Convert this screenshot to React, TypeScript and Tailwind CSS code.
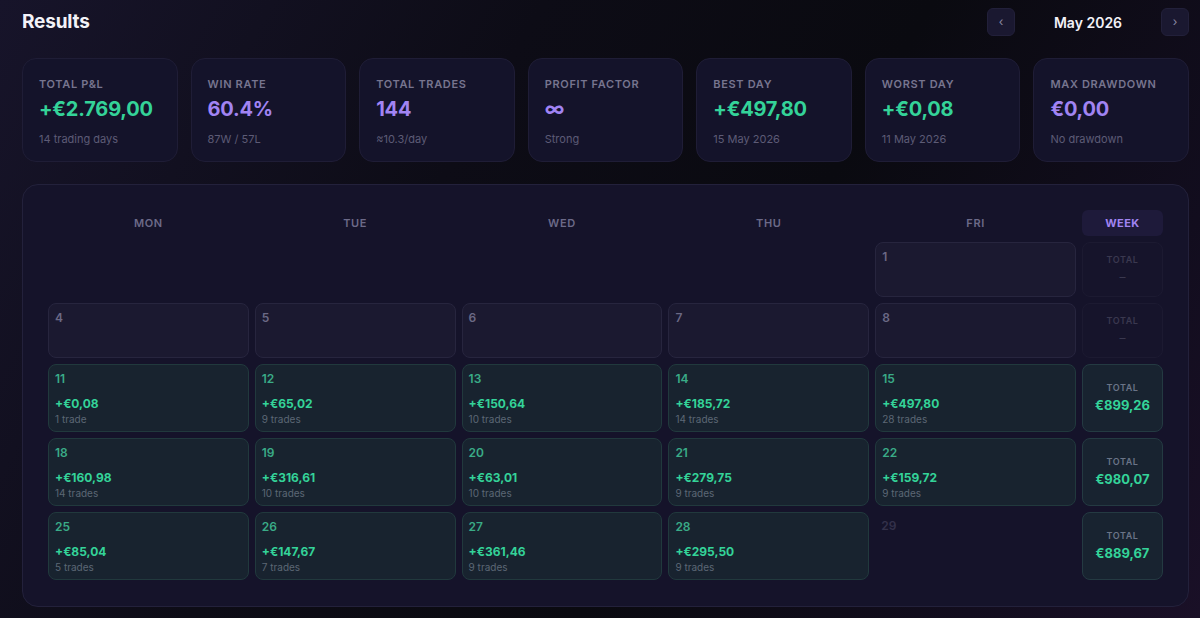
import React from "react";

type Stat = { label: string; value: string; sub: string; tone: "green" | "purple" };

const stats: Stat[] = [
  { label: "TOTAL P&L", value: "+€2.769,00", sub: "14 trading days", tone: "green" },
  { label: "WIN RATE", value: "60.4%", sub: "87W / 57L", tone: "purple" },
  { label: "TOTAL TRADES", value: "144", sub: "≈10.3/day", tone: "purple" },
  { label: "PROFIT FACTOR", value: "∞", sub: "Strong", tone: "purple" },
  { label: "BEST DAY", value: "+€497,80", sub: "15 May 2026", tone: "green" },
  { label: "WORST DAY", value: "+€0,08", sub: "11 May 2026", tone: "green" },
  { label: "MAX DRAWDOWN", value: "€0,00", sub: "No drawdown", tone: "purple" },
];

type Day =
  | { kind: "blank" }
  | { kind: "empty"; n: number }
  | { kind: "future"; n: number }
  | { kind: "trade"; n: number; pnl: string; trades: string };

type Week = { days: Day[]; total: string | null; tall: boolean };

const weeks: Week[] = [
  {
    days: [{ kind: "blank" }, { kind: "blank" }, { kind: "blank" }, { kind: "blank" }, { kind: "empty", n: 1 }],
    total: null,
    tall: false,
  },
  {
    days: [4, 5, 6, 7, 8].map((n) => ({ kind: "empty", n }) as Day),
    total: null,
    tall: false,
  },
  {
    days: [
      { kind: "trade", n: 11, pnl: "+€0,08", trades: "1 trade" },
      { kind: "trade", n: 12, pnl: "+€65,02", trades: "9 trades" },
      { kind: "trade", n: 13, pnl: "+€150,64", trades: "10 trades" },
      { kind: "trade", n: 14, pnl: "+€185,72", trades: "14 trades" },
      { kind: "trade", n: 15, pnl: "+€497,80", trades: "28 trades" },
    ],
    total: "€899,26",
    tall: true,
  },
  {
    days: [
      { kind: "trade", n: 18, pnl: "+€160,98", trades: "14 trades" },
      { kind: "trade", n: 19, pnl: "+€316,61", trades: "10 trades" },
      { kind: "trade", n: 20, pnl: "+€63,01", trades: "10 trades" },
      { kind: "trade", n: 21, pnl: "+€279,75", trades: "9 trades" },
      { kind: "trade", n: 22, pnl: "+€159,72", trades: "9 trades" },
    ],
    total: "€980,07",
    tall: true,
  },
  {
    days: [
      { kind: "trade", n: 25, pnl: "+€85,04", trades: "5 trades" },
      { kind: "trade", n: 26, pnl: "+€147,67", trades: "7 trades" },
      { kind: "trade", n: 27, pnl: "+€361,46", trades: "9 trades" },
      { kind: "trade", n: 28, pnl: "+€295,50", trades: "9 trades" },
      { kind: "future", n: 29 },
    ],
    total: "€889,67",
    tall: true,
  },
];

function StatCard({ s }: { s: Stat }) {
  return (
    <div className="h-[104px] rounded-[14px] border border-[#1f1d36] bg-[#14132a] px-4 pt-[18px]">
      <div className="text-[11px] leading-[14px] font-semibold tracking-[0.06em] text-[#77758f]">{s.label}</div>
      <div
        className={`mt-[4px] whitespace-nowrap text-[20px] leading-[28px] font-bold tracking-[-0.01em] ${
          s.tone === "green" ? "text-[#34d399]" : "text-[#a184f3]"
        }`}
      >
        {s.value}
      </div>
      <div className="mt-[9px] text-[11px] leading-[14px] text-[#5d5b76]">{s.sub}</div>
    </div>
  );
}

function DayCell({ d, tall }: { d: Day; tall: boolean }) {
  const h = tall ? "h-[68px]" : "h-[55px]";
  if (d.kind === "blank") return <div className={h} />;
  if (d.kind === "future")
    return (
      <div className={`${h} px-[6px] pt-[6px] text-[12px] leading-4 font-semibold text-[#33314a]`}>{d.n}</div>
    );
  if (d.kind === "empty")
    return (
      <div
        className={`${h} rounded-[8px] border border-[#27253e] bg-[#1b1930] px-[6px] pt-[6px] text-[12px] leading-4 font-semibold text-[#6b6985]`}
      >
        {d.n}
      </div>
    );
  return (
    <div className={`${h} flex flex-col rounded-[8px] border border-[#21393d] bg-[#18232f] px-[6px] pt-[6px] pb-[5px]`}>
      <div className="text-[12px] leading-4 font-semibold text-[#3aab87]">{d.n}</div>
      <div className="mt-auto text-[12px] leading-4 font-bold text-[#34d399]">{d.pnl}</div>
      <div className="text-[10px] leading-[14px] text-[#5c6775]">{d.trades}</div>
    </div>
  );
}

function WeekTotal({ total, tall }: { total: string | null; tall: boolean }) {
  const h = tall ? "h-[68px]" : "h-[55px]";
  if (!total)
    return (
      <div
        className={`${h} flex flex-col items-center justify-center rounded-[8px] border border-[#1c1a31] bg-[#16142b]`}
      >
        <div className="text-[9px] leading-3 font-semibold tracking-[0.06em] text-[#3a384f]">TOTAL</div>
        <div className="mt-[3px] text-[12px] leading-4 text-[#3a384f]">–</div>
      </div>
    );
  return (
    <div
      className={`${h} flex flex-col items-center justify-center rounded-[8px] border border-[#243a42] bg-[#182330]`}
    >
      <div className="text-[9px] leading-3 font-semibold tracking-[0.06em] text-[#6a7487]">TOTAL</div>
      <div className="mt-[2px] text-[13px] leading-[18px] font-bold text-[#34d399]">{total}</div>
    </div>
  );
}

export default function App() {
  return (
    <div
      className="h-[618px] overflow-hidden bg-[#0b0a12] bg-[linear-gradient(120deg,#17142a_0%,#0d0c16_35%,#0a0a10_60%,#120d1e_85%,#1a1027_100%)] pl-[22px] pr-[11px] text-white"
      style={{ fontFamily: "Inter, 'Noto Sans', sans-serif" }}
    >
      <div className="flex h-[44px] items-center justify-between">
        <h1 className="text-[19px] font-bold tracking-[-0.01em] text-[#f3f2f8]">Results</h1>
        <div className="flex items-center">
          <button
            type="button"
            className="flex h-7 w-7 items-center justify-center rounded-[6px] border border-[#22203a] bg-[#1a1830] text-[12px] text-[#8a88a2]"
          >
            ‹
          </button>
          <div className="w-[146px] text-center text-[14px] font-semibold text-[#f3f2f8]">May 2026</div>
          <button
            type="button"
            className="flex h-7 w-7 items-center justify-center rounded-[6px] border border-[#22203a] bg-[#1a1830] text-[12px] text-[#8a88a2]"
          >
            ›
          </button>
        </div>
      </div>

      <div className="mt-[14px] grid grid-cols-7 gap-[13px]">
        {stats.map((s) => (
          <StatCard key={s.label} s={s} />
        ))}
      </div>

      <div className="mt-[22px] h-[423px] rounded-[16px] border border-[#23213b] bg-[#15132a] px-[25px] pt-[25px]">
        <div className="grid grid-cols-[repeat(5,minmax(0,1fr))_81px] gap-[6px]">
          {["MON", "TUE", "WED", "THU", "FRI"].map((d) => (
            <div
              key={d}
              className="flex h-[26px] items-center justify-center text-[11px] font-semibold tracking-[0.06em] text-[#6c6a88]"
            >
              {d}
            </div>
          ))}
          <div className="flex h-[26px] items-center justify-center rounded-[6px] bg-[#1e1a3a] text-[11px] font-bold tracking-[0.04em] text-[#a184f3]">
            WEEK
          </div>
          {weeks.map((w, i) => (
            <React.Fragment key={i}>
              {w.days.map((d, j) => (
                <DayCell key={j} d={d} tall={w.tall} />
              ))}
              <WeekTotal total={w.total} tall={w.tall} />
            </React.Fragment>
          ))}
        </div>
      </div>
    </div>
  );
}
